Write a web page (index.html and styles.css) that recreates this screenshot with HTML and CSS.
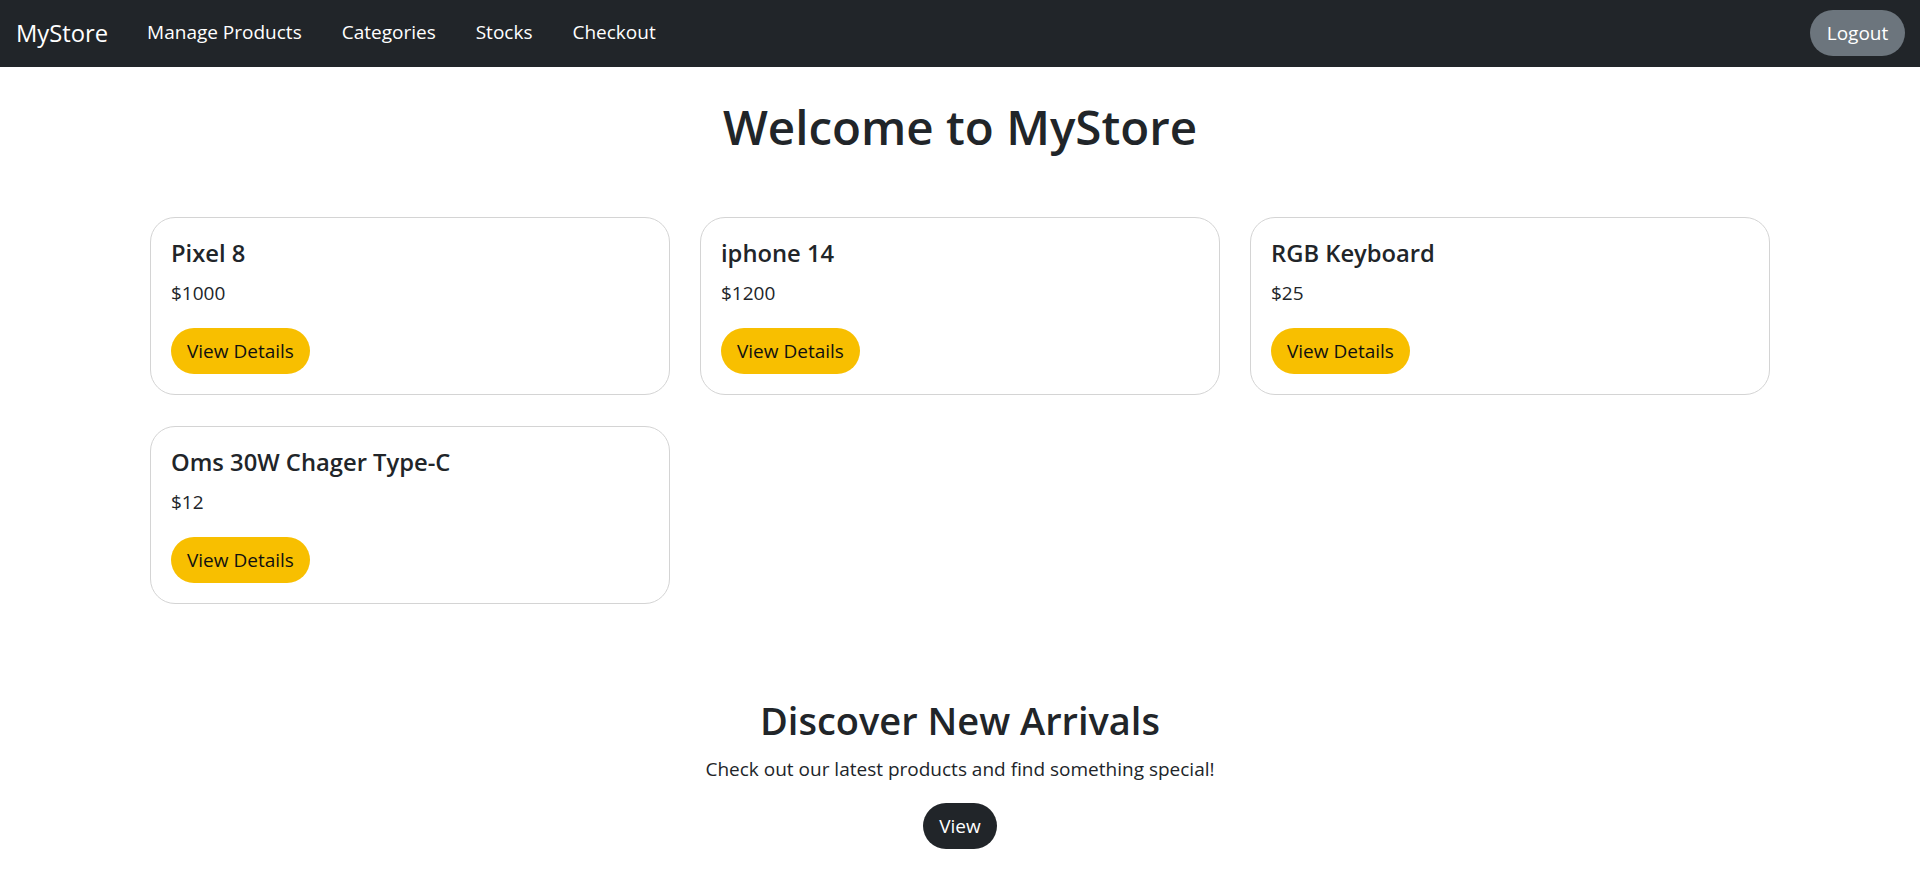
FILE: index.html
```html
<!DOCTYPE html>
<html lang="en">
<head>
<meta charset="utf-8">
<title>MyStore</title>
<link rel="stylesheet" href="styles.css">
</head>
<body>
<nav class="navbar">
  <a class="brand" href="#">MyStore</a>
  <ul class="nav-links">
    <li><a href="#">Manage Products</a></li>
    <li><a href="#">Categories</a></li>
    <li><a href="#">Stocks</a></li>
    <li><a href="#">Checkout</a></li>
  </ul>
  <button class="btn btn-logout">Logout</button>
</nav>

<main class="container">
  <h1 class="page-title">Welcome to MyStore</h1>

  <div class="product-grid">
    <div class="card">
      <h5 class="card-title">Pixel 8</h5>
      <p class="card-price">$1000</p>
      <button class="btn btn-warning">View Details</button>
    </div>
    <div class="card">
      <h5 class="card-title">iphone 14</h5>
      <p class="card-price">$1200</p>
      <button class="btn btn-warning">View Details</button>
    </div>
    <div class="card">
      <h5 class="card-title">RGB Keyboard</h5>
      <p class="card-price">$25</p>
      <button class="btn btn-warning">View Details</button>
    </div>
    <div class="card">
      <h5 class="card-title">Oms 30W Chager Type-C</h5>
      <p class="card-price">$12</p>
      <button class="btn btn-warning">View Details</button>
    </div>
  </div>

  <section class="arrivals">
    <h2 class="arrivals-title">Discover New Arrivals</h2>
    <p class="arrivals-text">Check out our latest products and find something special!</p>
    <button class="btn btn-dark">View</button>
  </section>
</main>
</body>
</html>
```

FILE: styles.css
```css
* { box-sizing: border-box; }

html, body {
  margin: 0;
  padding: 0;
  background: #ffffff;
}

body {
  font-family: "Open Sans", "Noto Sans", sans-serif;
  color: #212529;
  font-size: 19px;
  line-height: 1.5;
}

a { text-decoration: none; }

.navbar {
  height: 67px;
  background: #212529;
  display: flex;
  align-items: center;
  padding: 0 15px 0 16px;
}

.brand {
  color: #ffffff;
  font-size: 23.75px;
  line-height: 1.5;
  margin-right: 39px;
}

.nav-links {
  list-style: none;
  margin: 0;
  padding: 0 0 3px 0;
  display: flex;
  gap: 40px;
}

.nav-links a {
  color: #ffffff;
  font-size: 19px;
  line-height: 1.5;
}

.btn {
  font-family: inherit;
  font-size: 19px;
  height: 46px;
  line-height: 44px;
  padding: 0 15px;
  border: 1px solid transparent;
  border-radius: 23px;
  cursor: pointer;
}

.btn-logout {
  margin-left: auto;
  margin-top: -2px;
  width: 95px;
  background: #6c757d;
  color: #ffffff;
}

.container {
  max-width: 1620px;
  margin: 0 auto;
}

.page-title {
  margin: 31px 0 62px;
  text-align: center;
  font-size: 47.5px;
  font-weight: 600;
  line-height: 57px;
}

.product-grid {
  display: grid;
  grid-template-columns: repeat(3, 1fr);
  column-gap: 30px;
  row-gap: 31px;
}

.card {
  border: 1px solid #d4d4d4;
  border-radius: 25px;
  padding: 20px;
  height: 178px;
}

.card-title {
  margin: 0 0 10px;
  font-size: 23.75px;
  font-weight: 600;
  line-height: 30px;
}

.card-price {
  margin: 0 0 20px;
  font-size: 19px;
  line-height: 30px;
}

.btn-warning {
  background: #f8bf00;
  color: #111111;
}

.arrivals {
  margin-top: 92px;
  text-align: center;
}

.arrivals-title {
  margin: 0 0 10px;
  font-size: 38px;
  font-weight: 600;
  line-height: 48px;
}

.arrivals-text {
  margin: 0 0 19px;
  font-size: 19px;
  line-height: 30px;
}

.btn-dark {
  background: #212529;
  color: #ffffff;
}
```
